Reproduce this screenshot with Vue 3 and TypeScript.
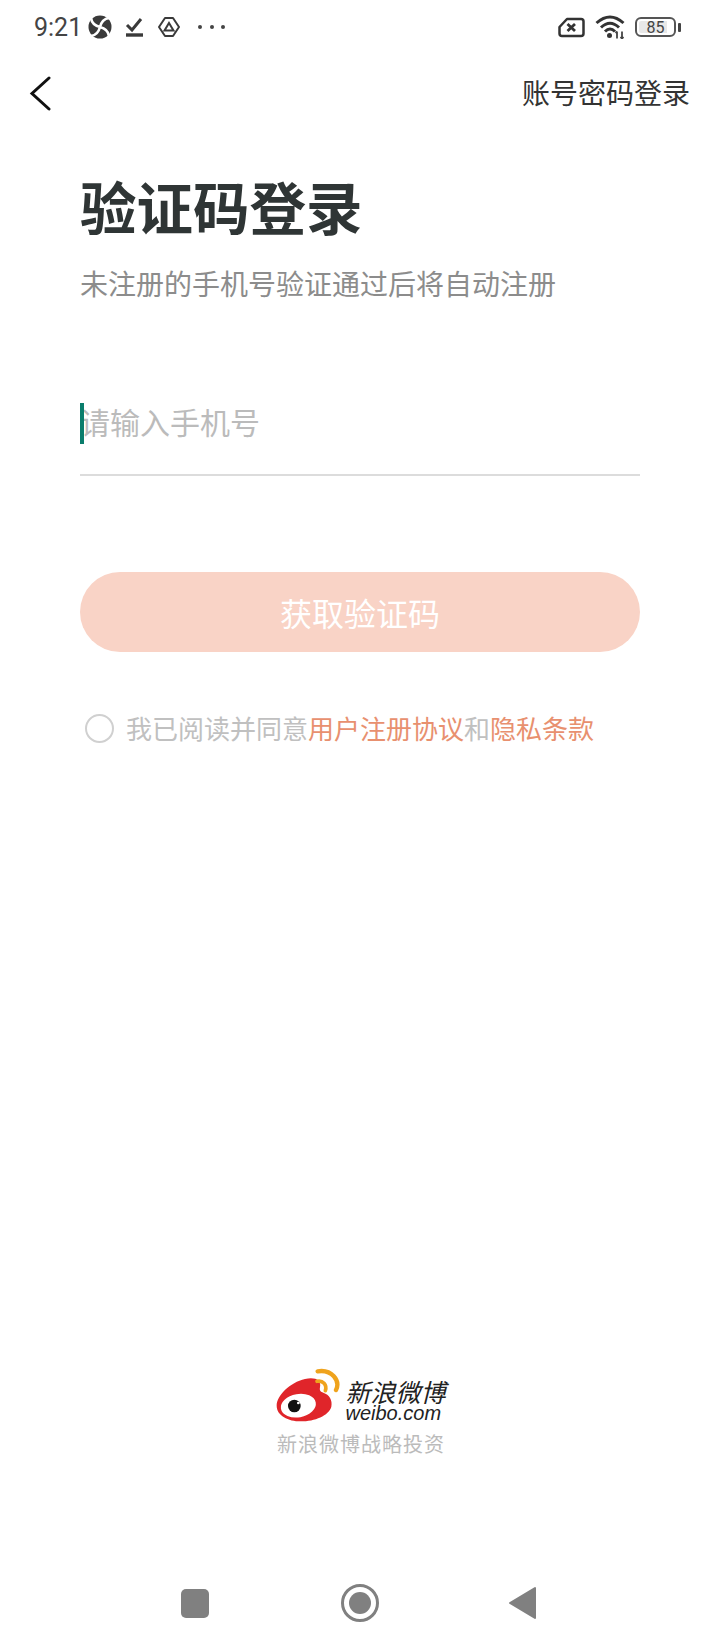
<template>
  <div class="page">
    <div class="status-bar">
      <span class="time">9:21</span>
      <svg class="ic-aperture" width="26" height="26" viewBox="0 0 26 26">
        <circle cx="13" cy="13" r="11.5" fill="#3a3a3a" />
        <path d="M4 4 Q5 11 13 13 M22 4 Q15 5 13 13 M22 22 Q21 15 13 13 M4 22 Q11 21 13 13" stroke="#fff" stroke-width="2.600" fill="none" />
      </svg>
      <svg class="ic-check" width="20" height="22" viewBox="0 0 20 22">
        <path d="M2 9 L7 14 L16 3" stroke="#3a3a3a" stroke-width="3" fill="none" />
        <rect x="1" y="17.300" width="17" height="3.400" fill="#3a3a3a" />
      </svg>
      <svg class="ic-drive" width="24" height="22" viewBox="0 0 24 22">
        <path d="M8 2 H16 L22 11 L16 20 H8 L2 11 Z" fill="none" stroke="#3a3a3a" stroke-width="2" stroke-linejoin="round" />
        <path d="M12 7 L16.500 14.500 H7.500 Z" fill="none" stroke="#3a3a3a" stroke-width="2" />
      </svg>
      <div class="dots"><i></i><i></i><i></i></div>
      <div class="status-right">
        <svg width="27" height="21" viewBox="0 0 27 21">
          <path d="M9 2 H23 Q25.500 2 25.500 4.500 V16.500 Q25.500 19 23 19 H4 Q1.500 19 1.500 16.500 V10 Z" fill="none" stroke="#333" stroke-width="2.500" stroke-linejoin="round" />
          <path d="M9.500 7 L17 14 M17 7 L9.500 14" stroke="#333" stroke-width="2.800" />
        </svg>
        <svg class="ic-wifi" width="31" height="24" viewBox="0 0 31 24">
          <path d="M1.500 8 Q15 -4 28.500 8" fill="none" stroke="#333" stroke-width="3" />
          <path d="M6 12.500 Q15 4 24 12.500" fill="none" stroke="#333" stroke-width="3" />
          <path d="M10 16.500 Q15 11.500 20 16.500" fill="none" stroke="#333" stroke-width="3" />
          <circle cx="14.500" cy="20.500" r="2.500" fill="#333" />
          <path d="M22 23.500 V16.500 M20.500 18 L22 16.500 M27 16.500 V23.500 M25.500 22 L27 23.500 L28.500 22" fill="none" stroke="#444" stroke-width="1.800" />
        </svg>
        <div class="battery">
          <div class="battery-body"><span>85</span></div>
          <i class="battery-tip"></i>
        </div>
      </div>
    </div>

    <header class="top-bar">
      <svg width="24" height="36" viewBox="0 0 24 36">
        <path d="M20 2 L3 17.500 L20 33" fill="none" stroke="#111" stroke-width="3" stroke-linecap="round" />
      </svg>
      <span class="switch-link">账号密码登录</span>
    </header>

    <main class="form">
      <h1 class="title">验证码登录</h1>
      <p class="subtitle">未注册的手机号验证通过后将自动注册</p>
      <div class="phone-field">
        <i class="caret"></i>
        <input class="phone-input" type="tel" placeholder="请输入手机号" />
      </div>
      <button class="submit" type="button">获取验证码</button>
      <div class="agreement">
        <span class="radio"></span>
        <span class="agree-text">我已阅读并同意<a>用户注册协议</a>和<a>隐私条款</a></span>
      </div>
    </main>

    <footer class="brand">
      <div class="brand-logo">
        <svg width="70" height="60" viewBox="0 0 210 180">
          <path d="M20 125 C20 95 60 55 105 45 C135 38 155 48 150 70 C148 80 152 84 160 86 C178 92 188 108 184 128 C176 155 135 172 92 172 C55 172 20 155 20 125 Z" fill="#e0252a" />
          <ellipse cx="85" cy="125" rx="53" ry="35" fill="#fff" transform="rotate(-10 85 125)" />
          <circle cx="73" cy="126" r="19" fill="#111" />
          <circle cx="85" cy="117" r="4" fill="#fff" />
          <path d="M143 22 C185 15 212 50 198 78" fill="none" stroke="#efa31d" stroke-width="13" stroke-linecap="round" />
          <path d="M141 52 C158 48 172 62 166 80" fill="none" stroke="#efa31d" stroke-width="11" stroke-linecap="round" />
        </svg>
        <div class="brand-words">
          <span class="brand-cn">新浪微博</span>
          <span class="brand-en">weibo.com</span>
        </div>
      </div>
      <p class="brand-note">新浪微博战略投资</p>
    </footer>

    <nav class="nav-bar">
      <span class="nav-square"></span>
      <svg width="38" height="38" viewBox="0 0 38 38">
        <circle cx="19" cy="19" r="17.500" fill="none" stroke="#808080" stroke-width="3" />
        <circle cx="19" cy="19" r="11" fill="#808080" />
      </svg>
      <svg class="nav-back" width="30" height="34" viewBox="0 0 30 34">
        <path d="M27 2 V32 L2 17 Z" fill="#808080" stroke="#808080" stroke-width="2" stroke-linejoin="round" />
      </svg>
    </nav>
  </div>
</template>

<script setup lang="ts">
</script>

<style>
html,
body {
  margin: 0;
  background: #fff;
}
</style>

<style scoped>
.page {
  width: 720px;
  height: 1650px;
  display: flex;
  flex-direction: column;
  background: #fff;
  font-family: "Noto Sans CJK SC", "Noto Sans", sans-serif;
}

.status-bar {
  height: 54px;
  display: flex;
  align-items: center;
  padding: 0 39px 0 34px;
  box-sizing: border-box;
}

.time {
  font: 25px Roboto, sans-serif;
  color: #444;
}

.ic-aperture {
  margin-left: 5px;
}

.ic-check {
  margin-left: 12px;
}

.ic-drive {
  margin-left: 12px;
}

.dots {
  display: flex;
  gap: 7.500px;
  margin-left: 17px;
}

.dots i {
  width: 4px;
  height: 4px;
  border-radius: 50%;
  background: #444;
}

.status-right {
  margin-left: auto;
  display: flex;
  align-items: center;
  gap: 9px;
}

.ic-wifi {
  margin-left: 1px;
}

.battery {
  display: flex;
  align-items: center;
  gap: 2px;
}

.battery-body {
  width: 41px;
  height: 20px;
  box-sizing: border-box;
  border: 2px solid #555;
  border-radius: 6px;
  display: flex;
  align-items: center;
  justify-content: center;
  background: linear-gradient(90deg, #e8e8e8 85%, #fff 85%) content-box;
  padding: 2px;
}

.battery-body span {
  font: 16px Roboto, sans-serif;
  color: #444;
}

.battery-tip {
  width: 3px;
  height: 9px;
  border-radius: 1px;
  background: #444;
}

.top-bar {
  height: 80px;
  display: flex;
  align-items: center;
  justify-content: space-between;
  padding: 0 30px 0 29px;
}

.switch-link {
  margin-bottom: 4px;
  font-size: 28px;
  line-height: 40px;
  color: #333;
}

.form {
  padding: 0 80px;
}

.title {
  margin: 33px 0 0;
  font-size: 56.500px;
  line-height: 76px;
  font-weight: 700;
  color: #2f3535;
}

.subtitle {
  margin: 20px 0 0;
  font-size: 28px;
  line-height: 40px;
  color: #8c8c8c;
}

.phone-field {
  position: relative;
  margin-top: 100px;
  height: 71px;
  border-bottom: 2px solid #dcdcdc;
}

.caret {
  position: absolute;
  left: 0;
  top: 0;
  width: 4px;
  height: 41px;
  background: #0a7d6c;
}

.phone-input {
  display: block;
  width: 100%;
  height: 37px;
  border: 0;
  outline: 0;
  padding: 0;
  font: 30px/37px "Noto Sans CJK SC", sans-serif;
  color: #333;
  background: transparent;
}

.phone-input::placeholder {
  color: #bbb;
  opacity: 1;
}

.submit {
  display: block;
  width: 100%;
  height: 80px;
  margin-top: 96px;
  border: 0;
  border-radius: 40px;
  background: #f9d3c6;
  color: #fff;
  font: 32px "Noto Sans CJK SC", sans-serif;
}

.agreement {
  display: flex;
  align-items: center;
  margin-top: 56px;
  padding-left: 5px;
  height: 40px;
}

.radio {
  width: 25px;
  height: 25px;
  border: 2px solid #d0d0d0;
  border-radius: 50%;
}

.agree-text {
  margin-left: 12px;
  font-size: 26px;
  line-height: 40px;
  color: #c0c0c0;
  white-space: nowrap;
}

.agree-text a {
  color: #e8906f;
}

.brand {
  margin-top: auto;
  display: flex;
  flex-direction: column;
  align-items: center;
}

.brand-logo {
  display: flex;
  align-items: flex-end;
  gap: 5px;
  padding-right: 4px;
}

.brand-words {
  display: flex;
  flex-direction: column;
  margin-bottom: 3px;
}

.brand-cn {
  margin-bottom: 1px;
  font-size: 25px;
  line-height: 26px;
  font-style: italic;
  color: #222;
}

.brand-en {
  font: italic 20px/16px "Liberation Sans", sans-serif;
  color: #222;
}

.brand-note {
  margin: 5px 0 0;
  padding-left: 2px;
  font-size: 20px;
  line-height: 30px;
  letter-spacing: 1px;
  color: #bbb;
}

.nav-bar {
  margin-top: 120px;
  margin-bottom: 23px;
  height: 48px;
  display: flex;
  align-items: center;
  gap: 132px;
  padding-left: 181px;
}

.nav-square {
  width: 28px;
  height: 29px;
  border-radius: 5px;
  background: #808080;
}

.nav-back {
  margin-left: -3px;
}
</style>
